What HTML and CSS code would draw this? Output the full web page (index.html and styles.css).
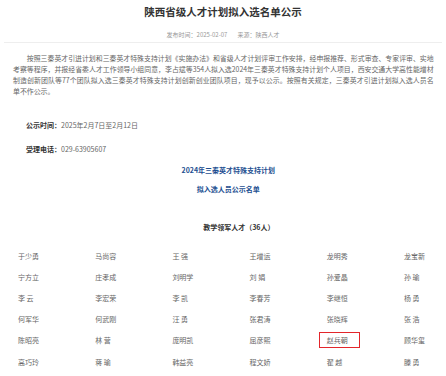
FILE: index.html
```html
<!DOCTYPE html>
<html lang="zh-CN">
<head>
<meta charset="utf-8">
<title>陕西省级人才计划拟入选名单公示</title>
<link rel="stylesheet" href="styles.css">
</head>
<body>
<div class="page">
  <h1 class="title">陕西省级人才计划拟入选名单公示</h1>
  <div class="meta"><span>发布时间：2025-02-07</span><span>来源：陕西人才</span></div>
  <div class="divider"></div>
  <div class="content">
    <p class="intro">按照三秦英才引进计划和三秦英才特殊支持计划《实施办法》和省级人才计划评审工作安排，经申报推荐、形式审查、专家评审、实地考察等程序，并报经省委人才工作领导小组同意，李占斌等354人拟入选2024年三秦英才特殊支持计划个人项目，西安交通大学高性能增材制造创新团队等77个团队拟入选三秦英才特殊支持计划创新创业团队项目，现予以公示。按照有关规定，三秦英才引进计划拟入选人员名单不作公示。</p>
    <p class="info info-first"><b>公示时间：</b>2025年2月7日至2月12日</p>
    <p class="info info-second"><b>受理电话：</b>029-63905607</p>
    <p class="blue blue-first">2024年三秦英才特殊支持计划</p>
    <p class="blue blue-second">拟入选人员公示名单</p>
    <h2 class="section">教学领军人才（36人）</h2>
    <div class="names">
      <span>于少勇</span><span>马尚容</span><span>王 强</span><span>王增运</span><span>龙明秀</span><span>龙宝新</span>
      <span>宁方立</span><span>庄孝成</span><span>刘明学</span><span>刘 娟</span><span>孙爱晶</span><span>孙 瑜</span>
      <span>李 云</span><span>李宏荣</span><span>李 凯</span><span>李春芳</span><span>李继恒</span><span>杨 勇</span>
      <span>何军华</span><span>何武刚</span><span>汪 勇</span><span>张君涛</span><span>张晓辉</span><span>张 浩</span>
      <span>陈昭亮</span><span>林 营</span><span>庞明凯</span><span>屈彦熙</span><span><em class="mark">赵兵朝</em></span><span>顾华玺</span>
      <span>高巧玲</span><span>蒋 瑜</span><span>韩益亮</span><span>程文娇</span><span>翟 越</span><span>滕 勇</span>
    </div>
  </div>
</div>
</body>
</html>
```
FILE: styles.css
```css
html, body {
  margin: 0;
  padding: 0;
  background: #fff;
}
body {
  font-family: "Noto Sans CJK SC", "Liberation Sans", sans-serif;
  color: #555;
  overflow: hidden;
}
.page {
  width: 446px;
}
.title {
  margin: 5px 0 0;
  font-size: 10.5px;
  line-height: 14px;
  font-weight: 700;
  color: #333;
  text-align: center;
}
.meta {
  margin-top: 12px;
  display: flex;
  justify-content: center;
  gap: 10px;
  font-size: 6px;
  line-height: 8px;
  color: #999;
}
.divider {
  margin: 3px 4px 0;
  border-top: 1px solid #eeeeee;
}
.content {
  padding: 0 12.4px 0 13px;
}
.content p {
  margin: 0;
}
.intro {
  margin-top: 10px !important;
  font-size: 6.9px;
  line-height: 11px;
  text-indent: 2em;
  text-align: justify;
  color: #666;
}
.info {
  font-size: 7px;
  line-height: 11px;
  padding-left: 13px;
  color: #666;
}
.info b {
  color: #333;
  font-weight: 700;
}
.info-first {
  margin-top: 23px !important;
}
.info-second {
  margin-top: 13px !important;
}
.blue {
  font-size: 7px;
  line-height: 11px;
  font-weight: 700;
  color: #1d4f91;
  text-align: center;
  padding-left: 10px;
}
.blue-first {
  margin-top: 10px !important;
}
.blue-second {
  margin-top: 8px !important;
}
.section {
  margin: 27px 0 0;
  font-size: 7px;
  line-height: 11px;
  font-weight: 700;
  color: #333;
  text-align: center;
  padding-left: 31px;
}
.names {
  margin: 12px 0 0 5px;
  display: grid;
  grid-template-columns: repeat(5, 77.2px) 1fr;
  grid-auto-rows: 21.2px;
  font-size: 7px;
  color: #666;
}
.names span {
  display: flex;
  align-items: center;
  white-space: pre;
}
.mark {
  font-style: normal;
  display: inline-block;
  margin-left: -8px;
  padding: 0 11px 0 7px;
  line-height: 14px;
  border: 1px solid #e3262b;
}
```
